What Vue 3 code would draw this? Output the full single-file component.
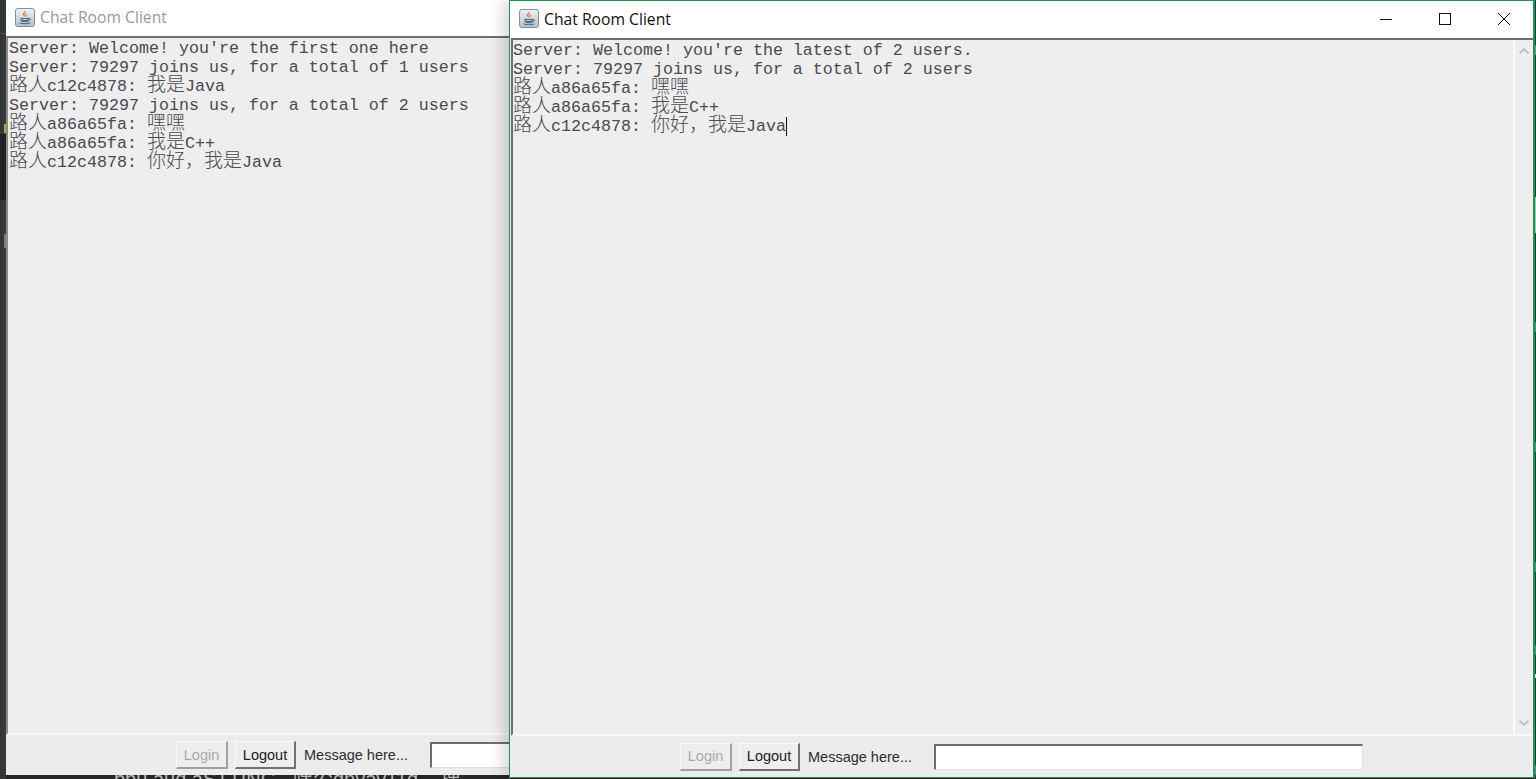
<script setup>
const hello = "你好\uFF0C我是"
const backLines = [
  [{ t: "Server: Welcome! you're the first one here" }],
  [{ t: "Server: 79297 joins us, for a total of 1 users" }],
  [{ c: "路人" }, { t: "c12c4878: " }, { c: "我是" }, { t: "Java" }],
  [{ t: "Server: 79297 joins us, for a total of 2 users" }],
  [{ c: "路人" }, { t: "a86a65fa: " }, { c: "嘿嘿" }],
  [{ c: "路人" }, { t: "a86a65fa: " }, { c: "我是" }, { t: "C++" }],
  [{ c: "路人" }, { t: "c12c4878: " }, { c: hello }, { t: "Java" }],
]
const frontLines = [
  [{ t: "Server: Welcome! you're the latest of 2 users." }],
  [{ t: "Server: 79297 joins us, for a total of 2 users" }],
  [{ c: "路人" }, { t: "a86a65fa: " }, { c: "嘿嘿" }],
  [{ c: "路人" }, { t: "a86a65fa: " }, { c: "我是" }, { t: "C++" }],
  [{ c: "路人" }, { t: "c12c4878: " }, { c: hello }, { t: "Java" }],
]
const windows = [
  { id: "back", lines: backLines, caret: false },
  { id: "front", lines: frontLines, caret: true },
]
const leftMarks = [
  { x: 0, y: 134, w: 6, h: 66, c: "#232323" },
  { x: 4, y: 124, w: 2, h: 9, c: "#b9a23a" },
  { x: 4, y: 234, w: 2, h: 14, c: "#7c7c7c" },
  { x: 0, y: 33, w: 6, h: 1, c: "#4a4f52" },
]
const rightMarks = [
  { y: 45, h: 10, c: "#6a9a88" },
  { y: 197, h: 36, c: "#8fd0ae" },
  { y: 322, h: 10, c: "#4f8f78" },
  { y: 442, h: 10, c: "#4f8f78" },
  { y: 562, h: 10, c: "#4f8f78" },
  { y: 645, h: 10, c: "#4f8f78" },
  { y: 674, h: 4, c: "#d8d8d8" },
  { y: 765, h: 10, c: "#4f8f78" },
]
const boxStyle = (m) => ({ left: m.x + "px", top: m.y + "px", width: m.w + "px", height: m.h + "px", background: m.c })
const railStyle = (m) => ({ top: m.y + "px", height: m.h + "px", background: m.c })
</script>

<template>
  <div class="desktop">
    <i v-for="(m, k) in leftMarks" :key="k" class="mark" :style="boxStyle(m)"></i>
    <i v-for="(m, k) in rightMarks" :key="'r' + k" class="rail" :style="railStyle(m)"></i>
    <div class="under">bpu aud aSTTING &nbsp; 嘿公dnvav11d &nbsp;&nbsp; 搜</div>
    <div v-for="w in windows" :key="w.id" class="win" :class="w.id">
      <div class="titlebar">
        <svg class="app-icon" viewBox="0 0 20 20" width="20" height="19" preserveAspectRatio="none">
          <defs>
            <linearGradient id="ig" x1="0" y1="0" x2="0" y2="1">
              <stop offset="0" stop-color="#f0f3f6" />
              <stop offset="1" stop-color="#b4c1cd" />
            </linearGradient>
          </defs>
          <rect x="0.5" y="0.5" width="19" height="19" rx="2.5" fill="url(#ig)" stroke="#7d8b99" />
          <path d="M10 3c1.5 1.6-1.8 2.8-.6 4.6.4.6.9.9 1.1 1.4-.9-.4-2.6-1.2-2.5-2.6C8.100 5 10.300 4.500 10 3zM12 5.500c-.8.6-1.500 1-1.300 2 .1.500.4.800.5 1.200" fill="#e8762d" stroke="#d9661f" stroke-width=".4" />
          <path d="M5.500 10.500c2 .8 7 .8 9 0M6 12.500c.4 1.500 1.500 2 4 2s3.600-.5 4-2c-2 .6-6 .6-8 0zM4.500 15.500c2.500 1.300 8.500 1.300 11 0" fill="none" stroke="#4f6a88" stroke-width="1.100" />
          <path d="M14.300 11.300c1.500-.6 2.300.8.400 1.800" fill="none" stroke="#4f6a88" stroke-width=".8" />
        </svg>
        <span class="title">Chat Room Client</span>
        <div v-if="w.id === 'front'" class="controls">
          <svg viewBox="0 0 12 12" width="12" height="12"><path d="M0 6.500h12" stroke="#111" fill="none" /></svg>
          <svg viewBox="0 0 12 12" width="12" height="12"><rect x=".5" y=".5" width="11" height="11" stroke="#111" fill="none" /></svg>
          <svg viewBox="0 0 12 12" width="12" height="12"><path d="M0 0l12 12M12 0L0 12" stroke="#111" fill="none" /></svg>
        </div>
      </div>
      <div class="content">
        <div class="log">
          <div v-for="(line, i) in w.lines" :key="i" class="line">
            <template v-for="(s, j) in line" :key="j">
              <span v-if="s.c" class="cjk">{{ s.c }}</span><span v-else>{{ s.t }}</span>
            </template>
            <span v-if="w.caret && i === w.lines.length - 1" class="caret"></span>
          </div>
        </div>
        <div v-if="w.id === 'front'" class="scroll">
          <svg viewBox="0 0 10 6" width="10" height="6"><path d="M.5 5.500L5 1l4.500 4.500" fill="none" stroke="#c2c2c2" stroke-width="1.800" /></svg>
          <svg viewBox="0 0 10 6" width="10" height="6"><path d="M.5.500L5 5l4.500-4.500" fill="none" stroke="#c2c2c2" stroke-width="1.800" /></svg>
        </div>
      </div>
      <div class="panel">
        <button class="btn disabled" type="button">Login</button>
        <button class="btn" type="button">Logout</button>
        <span class="msg">Message here...</span>
        <div class="input"></div>
      </div>
    </div>
  </div>
</template>

<style>
html, body { margin: 0; background: #262626; overflow: hidden; }
</style>

<style scoped>
.desktop {
  position: relative;
  width: 1536px;
  height: 779px;
  overflow: hidden;
  background: linear-gradient(90deg, #2f3538 0, #353a3d 6px, #262626 6px);
  font-family: "Liberation Sans", Arial, sans-serif;
}
.desktop::after {
  content: "";
  position: absolute;
  right: 0;
  top: 0;
  width: 1px;
  height: 100%;
  background: #12412e;
}
.mark {
  position: absolute;
}
.rail {
  position: absolute;
  right: 0;
  width: 1px;
  z-index: 1;
}
.under {
  position: absolute;
  left: 114px;
  top: 769px;
  color: #b9b9b9;
  font-size: 20px;
  line-height: 20px;
  white-space: nowrap;
  font-family: "Liberation Sans", "Noto Sans CJK SC", sans-serif;
}
.win {
  position: absolute;
  display: flex;
  flex-direction: column;
  box-sizing: border-box;
  background: #eeeeee;
  overflow: hidden;
}
.back {
  left: 6px;
  top: 0;
  width: 520px;
  height: 775px;
}
.front {
  left: 509px;
  top: 0;
  width: 1026px;
  height: 778px;
  border: 1px solid #1f9255;
  border-width: 1px 2px 1px 1px;
  box-shadow: -6px 0 14px rgba(0, 0, 0, 0.16);
}
.titlebar {
  display: flex;
  align-items: center;
  flex: none;
  box-sizing: border-box;
  background: #fff;
  height: 36px;
  padding: 0 0 2px 9px;
}
.front .titlebar {
  height: 37px;
}
.app-icon {
  flex: none;
}
.title {
  margin-left: 5px;
  font-family: "Open Sans", sans-serif;
  font-size: 15.700px;
  color: #999;
  white-space: nowrap;
}
.front .title {
  color: #111;
}
.controls {
  margin-left: auto;
  display: flex;
  align-items: center;
  gap: 47px;
  padding-right: 23px;
}
.content {
  flex: 1;
  min-height: 0;
  display: flex;
  box-sizing: border-box;
  margin-left: 1px;
  border-top: 2px solid #6e6e6e;
  border-left: 2px solid #6e6e6e;
  border-bottom: 2px solid #f8f8f8;
}
.back .content {
  margin-left: 0;
  border-left-color: #8a8a8a;
}
.log {
  flex: 1;
  padding: 1px 0 0 0;
  font-family: "Liberation Mono", monospace;
  font-size: 16.670px;
  line-height: 19px;
  color: #4a4a50;
  white-space: pre;
}
.back .log {
  padding-left: 1px;
}
.line {
  height: 19px;
  white-space: pre;
}
.cjk {
  font-family: "Noto Sans CJK SC", sans-serif;
  font-size: 19px;
  line-height: 0;
  font-weight: 300;
}
.caret {
  display: inline-block;
  width: 1px;
  height: 19px;
  background: #111;
  vertical-align: top;
}
.scroll {
  flex: none;
  width: 20px;
  box-sizing: border-box;
  border-left: 2px solid #fafafa;
  display: flex;
  flex-direction: column;
  justify-content: space-between;
  align-items: center;
  padding: 8px 0 8px;
}
.panel {
  flex: none;
  height: 40px;
  display: flex;
  align-items: center;
  box-sizing: border-box;
  background: #ececec;
  padding-left: 170px;
  font-size: 14.500px;
}
.front .panel {
  height: 41px;
}
.btn {
  flex: none;
  box-sizing: border-box;
  height: 28px;
  padding: 0;
  margin: 0 7px 0 0;
  background: #eeeeee;
  border: 1px solid;
  border-width: 1px 2px 2px 1px;
  border-color: #fafafa #707070 #707070 #fafafa;
  color: #222;
  font: inherit;
  width: 61px;
}
.btn.disabled {
  width: 52px;
  color: #a9a9a9;
  border-color: #f8f8f8 #a0a0a0 #a0a0a0 #f8f8f8;
}
.msg {
  margin-left: 1px;
  width: 126px;
  flex: none;
  color: #2c2c34;
  white-space: nowrap;
}
.input {
  flex: none;
  box-sizing: border-box;
  width: 429px;
  height: 26px;
  background: #fff;
  border: 1px solid #dedede;
  border-top: 2px solid #6e6e6e;
  border-left: 2px solid #6e6e6e;
}
</style>
